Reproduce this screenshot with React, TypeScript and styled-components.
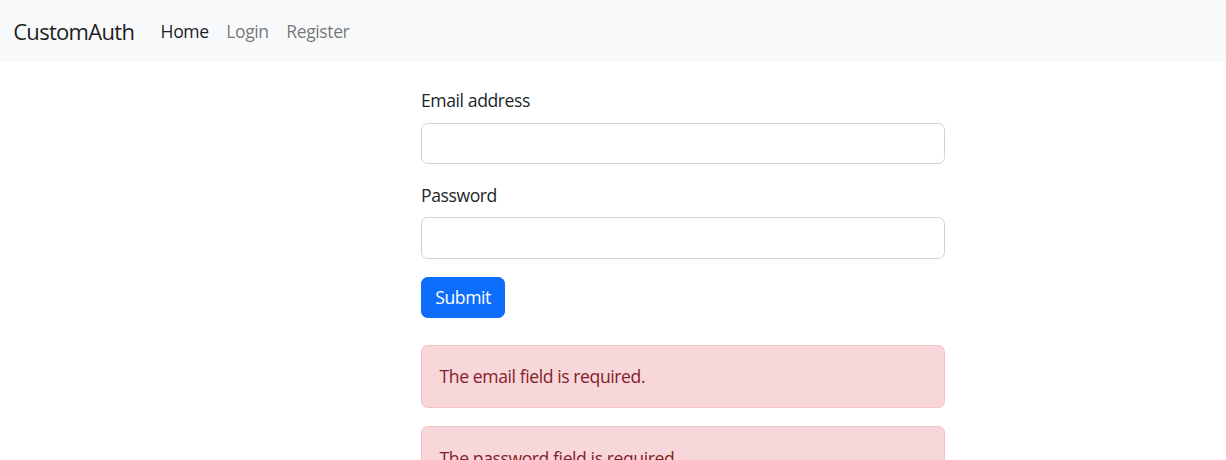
import React from "react";
import styled, { createGlobalStyle } from "styled-components";

const Global = createGlobalStyle`
  * { box-sizing: border-box; }
  body {
    margin: 0;
    font-family: "Open Sans", "Noto Sans", sans-serif;
    font-size: 17.6px;
    line-height: 26.4px;
    letter-spacing: -0.42px;
    color: #212529;
    background: #fff;
  }
`;

const Navbar = styled.nav`
  display: flex;
  align-items: center;
  height: 62px;
  padding: 0 13.2px;
  background: #f8f9fa;
`;

const Brand = styled.a`
  font-size: 22px;
  line-height: 33px;
  letter-spacing: -0.7px;
  color: rgba(0, 0, 0, 0.9);
  margin-right: 17.6px;
  text-decoration: none;
`;

const NavList = styled.div`
  display: flex;
`;

const NavLink = styled.a<{ $active?: boolean }>`
  padding: 8.8px;
  color: ${(p) => (p.$active ? "rgba(0,0,0,0.9)" : "rgba(0,0,0,0.55)")};
  text-decoration: none;
`;

const Main = styled.main`
  padding: 25.4px 0 0 421px;
`;

const Form = styled.form`
  width: 524px;
`;

const Field = styled.div`
  margin-bottom: 17.6px;
`;

const Label = styled.label`
  display: block;
  margin-bottom: 8.8px;
`;

const Input = styled.input`
  display: block;
  width: 100%;
  height: 41.8px;
  padding: 6.6px 13.2px;
  font: inherit;
  border: 1px solid #ced4da;
  border-radius: 6.6px;
  background: #fff;
`;

const Button = styled.button`
  display: block;
  height: 41.8px;
  padding: 6.6px 13.2px;
  font: inherit;
  letter-spacing: inherit;
  color: #fff;
  background: #0d6efd;
  border: 1px solid #0d6efd;
  border-radius: 6.6px;
`;

const Alerts = styled.div`
  margin-top: 26.4px;
  width: 524px;
`;

const Alert = styled.div`
  padding: 17.6px 17.6px;
  margin-bottom: 17.6px;
  color: #842029;
  background: #f8d7da;
  border: 1px solid #f5c2c7;
  border-radius: 6.6px;
`;

export default function App() {
  return (
    <>
      <Global />
      <Navbar>
        <Brand href="#">CustomAuth</Brand>
        <NavList>
          <NavLink $active href="#">Home</NavLink>
          <NavLink href="#">Login</NavLink>
          <NavLink href="#">Register</NavLink>
        </NavList>
      </Navbar>
      <Main>
        <Form onSubmit={(e) => e.preventDefault()}>
          <Field>
            <Label htmlFor="email">Email address</Label>
            <Input id="email" type="email" />
          </Field>
          <Field>
            <Label htmlFor="password">Password</Label>
            <Input id="password" type="password" />
          </Field>
          <Button type="submit">Submit</Button>
        </Form>
        <Alerts>
          <Alert>The email field is required.</Alert>
          <Alert>The password field is required.</Alert>
        </Alerts>
      </Main>
    </>
  );
}
